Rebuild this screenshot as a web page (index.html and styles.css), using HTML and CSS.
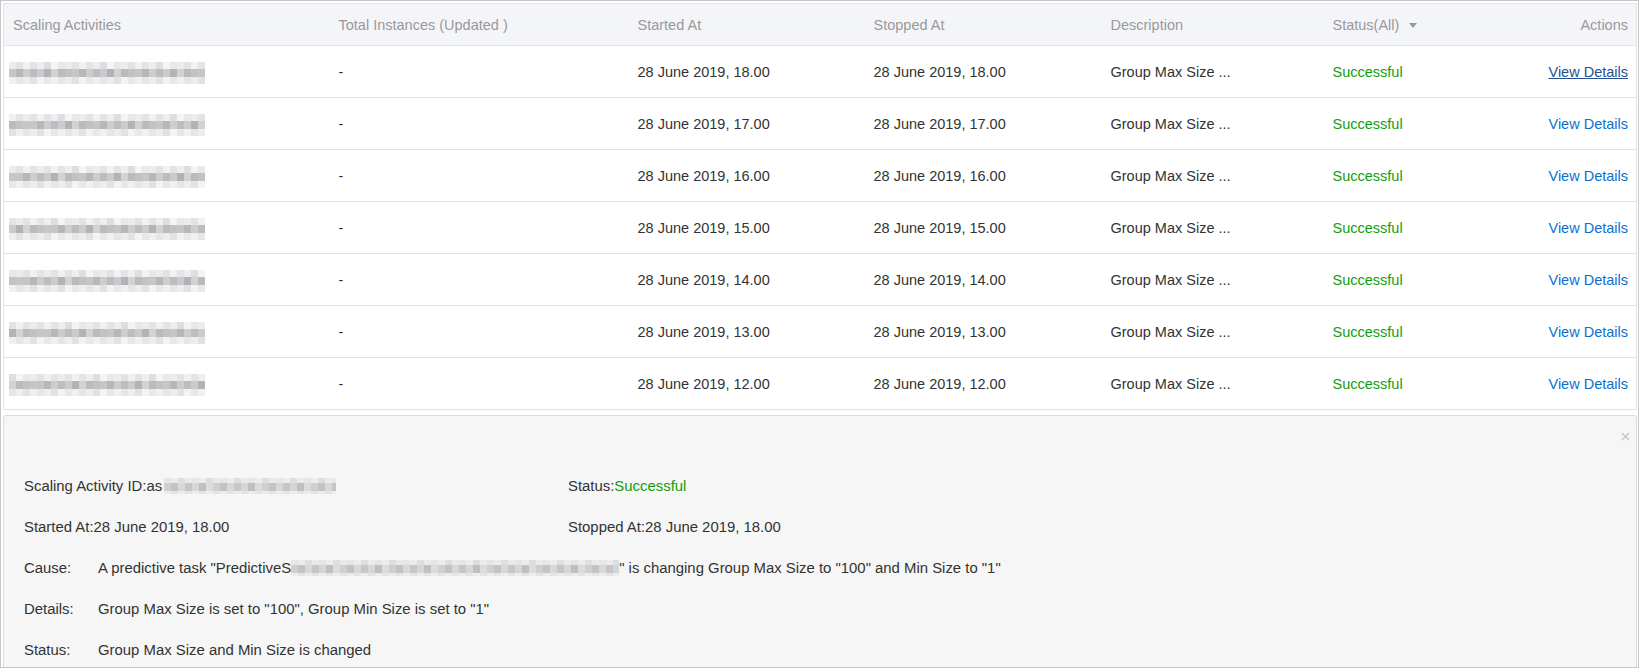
FILE: index.html
```html
<!DOCTYPE html>
<html lang="en">
<head>
  <meta charset="UTF-8">
  <title>Scaling Activities</title>
  <link rel="stylesheet" href="styles.css">
</head>
<body>

<div class="frame">
  <table class="activity-table">
    <colgroup>
      <col class="c-id">
      <col class="c-total">
      <col class="c-start">
      <col class="c-stop">
      <col class="c-desc">
      <col class="c-status">
      <col class="c-actions">
    </colgroup>
    <thead>
      <tr>
        <th>Scaling Activities</th>
        <th>Total Instances (Updated )</th>
        <th>Started At</th>
        <th>Stopped At</th>
        <th>Description</th>
        <th>Status(All) <span class="caret"></span></th>
        <th class="actions">Actions</th>
      </tr>
    </thead>
    <tbody>
      <tr>
        <td><span class="mosaic m1"></span></td>
        <td>-</td>
        <td>28 June 2019, 18.00</td>
        <td>28 June 2019, 18.00</td>
        <td>Group Max Size ...</td>
        <td class="ok">Successful</td>
        <td class="actions"><a class="link hover" href="#">View Details</a></td>
      </tr>
      <tr>
        <td><span class="mosaic m2"></span></td>
        <td>-</td>
        <td>28 June 2019, 17.00</td>
        <td>28 June 2019, 17.00</td>
        <td>Group Max Size ...</td>
        <td class="ok">Successful</td>
        <td class="actions"><a class="link" href="#">View Details</a></td>
      </tr>
      <tr>
        <td><span class="mosaic m3"></span></td>
        <td>-</td>
        <td>28 June 2019, 16.00</td>
        <td>28 June 2019, 16.00</td>
        <td>Group Max Size ...</td>
        <td class="ok">Successful</td>
        <td class="actions"><a class="link" href="#">View Details</a></td>
      </tr>
      <tr>
        <td><span class="mosaic m4"></span></td>
        <td>-</td>
        <td>28 June 2019, 15.00</td>
        <td>28 June 2019, 15.00</td>
        <td>Group Max Size ...</td>
        <td class="ok">Successful</td>
        <td class="actions"><a class="link" href="#">View Details</a></td>
      </tr>
      <tr>
        <td><span class="mosaic m5"></span></td>
        <td>-</td>
        <td>28 June 2019, 14.00</td>
        <td>28 June 2019, 14.00</td>
        <td>Group Max Size ...</td>
        <td class="ok">Successful</td>
        <td class="actions"><a class="link" href="#">View Details</a></td>
      </tr>
      <tr>
        <td><span class="mosaic m6"></span></td>
        <td>-</td>
        <td>28 June 2019, 13.00</td>
        <td>28 June 2019, 13.00</td>
        <td>Group Max Size ...</td>
        <td class="ok">Successful</td>
        <td class="actions"><a class="link" href="#">View Details</a></td>
      </tr>
      <tr>
        <td><span class="mosaic m7"></span></td>
        <td>-</td>
        <td>28 June 2019, 12.00</td>
        <td>28 June 2019, 12.00</td>
        <td>Group Max Size ...</td>
        <td class="ok">Successful</td>
        <td class="actions"><a class="link" href="#">View Details</a></td>
      </tr>
    </tbody>
  </table>

  <div class="detail">
    <div class="detail-top">
      <svg class="close" width="9" height="9" viewBox="0 0 9 9">
        <path d="M1 1 L8 8 M8 1 L1 8" stroke="#c4c4c4" stroke-width="1.3" fill="none"/>
      </svg>
    </div>
    <div class="detail-grid">
      <div class="field">Scaling Activity ID:as<span class="mosaic mosaic-id"></span></div>
      <div class="field">Status:<span class="ok">Successful</span></div>
      <div class="field">Started At:28 June 2019, 18.00</div>
      <div class="field">Stopped At:28 June 2019, 18.00</div>
    </div>
    <div class="field"><span class="label">Cause:</span>A predictive task "PredictiveS<span class="mosaic mosaic-cause"></span>" is changing Group Max Size to "100" and Min Size to "1"</div>
    <div class="field"><span class="label">Details:</span>Group Max Size is set to "100", Group Min Size is set to "1"</div>
    <div class="field"><span class="label">Status:</span>Group Max Size and Min Size is changed</div>
  </div>
</div>

</body>
</html>
```

FILE: styles.css
```css
html, body {
  margin: 0;
  padding: 0;
  background: #fff;
}

body {
  font-family: "Liberation Sans", Arial, sans-serif;
  font-size: 14.5px;
  color: #333;
}

.frame {
  box-sizing: border-box;
  width: 1639px;
  height: 668px;
  border: 1px solid #c6c6c6;
  padding: 2px 1px 0 2px;
  overflow: hidden;
}

/* table */
.activity-table {
  width: 100%;
  border-collapse: collapse;
  table-layout: fixed;
  border: 1px solid #e2e4e8;
}

.c-id { width: 326px; }
.c-total { width: 299px; }
.c-start { width: 236px; }
.c-stop { width: 237px; }
.c-desc { width: 222px; }
.c-status { width: 180px; }

.activity-table th {
  height: 41px;
  padding: 0 9px;
  background-color: #f4f5f9;
  color: #999;
  font-weight: normal;
  text-align: left;
  border-bottom: 1px solid #e2e4e8;
  white-space: nowrap;
}

.activity-table td {
  height: 51px;
  padding: 0 9px;
  border-bottom: 1px solid #e3e3e3;
  white-space: nowrap;
  vertical-align: middle;
}

.activity-table .actions {
  text-align: right;
  padding-right: 8px;
}

.caret {
  display: inline-block;
  width: 0;
  height: 0;
  margin-left: 6px;
  vertical-align: middle;
  border-left: 4.5px solid transparent;
  border-right: 4.5px solid transparent;
  border-top: 5px solid #999;
}

.ok {
  color: #109e10;
}

.link {
  color: #0d6fd1;
  text-decoration: none;
}

.link.hover {
  color: #1f4f8f;
  text-decoration: underline;
}

/* pixelated placeholders: light band, dark band, light band */
.mosaic {
  display: inline-block;
  vertical-align: middle;
  background-image:
    repeating-linear-gradient(90deg, #ececec 0 7px, #e3e3e3 7px 14px, #f1f1f1 14px 21px, #e6e3e6 21px 28px, #eceef1 28px 35px, #dedede 35px 42px, #f4f4f4 42px 49px, #e8e8e8 49px 56px),
    repeating-linear-gradient(90deg, #c6c6c6 0 7px, #b7b7b7 7px 14px, #cdcdcd 14px 21px, #bfbbbf 21px 28px, #c8ccd1 28px 35px, #b3b3b3 35px 42px, #d2d2d2 42px 49px, #bdbabd 49px 56px, #c2c2c2 56px 63px),
    repeating-linear-gradient(90deg, #f0f0f0 0 7px, #e6e6e6 7px 14px, #ededf0 14px 21px, #e2e2e2 21px 28px, #f3f3f3 28px 35px, #e9e7e9 35px 42px);
  background-size: 100% 7px, 100% 8px, 100% 7px;
  background-repeat: repeat-x;
  background-position: 0 0, 0 7px, 0 15px;
}

.activity-table .mosaic {
  width: 196px;
  height: 22px;
  margin-left: -4px;
  margin-top: 2px;
}

.m2 { background-position: 14px 0, 21px 7px, 7px 15px; }
.m3 { background-position: 28px 0, 7px 7px, 35px 15px; }
.m4 { background-position: 7px 0, 42px 7px, 14px 15px; }
.m5 { background-position: 35px 0, 14px 7px, 28px 15px; }
.m6 { background-position: 21px 0, 35px 7px, 0 15px; }
.m7 { background-position: 49px 0, 28px 7px, 21px 15px; }

/* detail panel */
.detail {
  margin-top: 5px;
  border: 1px solid #dcdcdc;
  border-radius: 3px;
  background-color: #f6f6f6;
  padding: 0 20px;
  height: 300px;
  font-size: 14.9px;
}

.detail-top {
  height: 50px;
  display: flex;
  justify-content: flex-end;
  align-items: flex-start;
}

.close {
  margin-top: 16px;
  margin-right: -14px;
}

.detail-grid {
  display: grid;
  grid-template-columns: 544px 1fr;
}

.field {
  height: 41px;
  line-height: 41px;
  white-space: nowrap;
}

.label {
  display: inline-block;
  width: 74px;
}

.detail .mosaic {
  background-image:
    repeating-linear-gradient(90deg, #e6e6e6 0 7px, #ececec 7px 14px, #dedede 14px 21px, #eaeaea 21px 28px),
    repeating-linear-gradient(90deg, #cfcfcf 0 7px, #c3c3c3 7px 14px, #d8d8d8 14px 21px, #c8c5c9 21px 28px, #d3d6da 28px 35px, #bfbfbf 35px 42px, #dcdcdc 42px 49px),
    repeating-linear-gradient(90deg, #ececec 0 7px, #e4e4e4 7px 14px);
  background-size: 100% 5px, 100% 8px, 100% 3px;
  background-repeat: no-repeat;
  background-position: 0 0, 0 5px, 0 13px;
}

.mosaic-id {
  width: 172px;
  height: 16px;
  margin-left: 2px;
  margin-top: -2px;
}

.mosaic-cause {
  width: 328px;
  height: 16px;
  margin-left: 0;
  margin-top: -2px;
}
```
